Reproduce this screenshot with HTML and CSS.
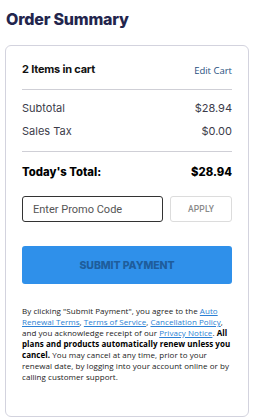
FILE: index.html
```html
<!DOCTYPE html>
<html lang="en">
<head>
    <meta charset="UTF-8">
    <meta name="viewport" content="width=device-width, initial-scale=1.0">
    <title>Order Summary</title>
    <link rel="stylesheet" href="styles.css">
</head>
<body>
    <h1 class="title">Order Summary</h1>

    <div class="card">
        <div class="cart-head">
            <strong>2 Items in cart</strong>
            <a href="#" class="edit-link">Edit Cart</a>
        </div>

        <div class="lines">
            <div class="line">
                <span>Subtotal</span>
                <span>$28.94</span>
            </div>
            <div class="line">
                <span>Sales Tax</span>
                <span>$0.00</span>
            </div>
        </div>

        <div class="total">
            <span>Today's Total:</span>
            <span>$28.94</span>
        </div>

        <div class="promo">
            <input type="text" class="promo-input" placeholder="Enter Promo Code">
            <button class="apply-btn">APPLY</button>
        </div>

        <button class="submit-btn">SUBMIT PAYMENT</button>

        <p class="legal">
            By clicking "Submit Payment", you agree to the <a href="#">Auto Renewal Terms</a>, <a href="#">Terms of Service</a>, <a href="#">Cancellation Policy</a>, and you acknowledge receipt of our <a href="#">Privacy Notice</a>. <strong>All plans and products automatically renew unless you cancel.</strong> You may cancel at any time, prior to your renewal date, by logging into your account online or by calling customer support.
        </p>
    </div>
</body>
</html>
```

FILE: styles.css
```css
body {
    margin: 0;
    padding: 9px 5px 6px;
    font-family: Inter, "Noto Sans", sans-serif;
    background: #fff;
    color: #111;
}
.title {
    margin: 0 0 16px 1px;
    font-size: 16px;
    line-height: 20px;
    font-weight: 800;
    color: #23254d;
    letter-spacing: -0.2px;
}
.card {
    border: 1px solid #d3d3de;
    border-radius: 6px;
    padding: 16px 16px 34px 16px;
}
.cart-head {
    display: flex;
    justify-content: space-between;
    align-items: center;
    height: 14px;
    padding-bottom: 13px;
    border-bottom: 1px solid #cfcfd6;
}
.cart-head strong {
    font-size: 11px;
    font-weight: 700;
    letter-spacing: -0.2px;
}
.edit-link {
    font-family: "Open Sans", sans-serif;
    font-size: 9.5px;
    font-weight: 500;
    color: #1f4f80;
    text-decoration: none;
    padding-top: 3px;
}
.lines {
    padding: 10px 0 12px;
    border-bottom: 1px solid #cfcfd6;
    display: flex;
    flex-direction: column;
    gap: 7px;
}
.line {
    display: flex;
    justify-content: space-between;
    font-size: 11px;
    line-height: 16px;
    color: #3c3c4a;
}
.total {
    display: flex;
    justify-content: space-between;
    margin-top: 12px;
    font-size: 11.3px;
    line-height: 16px;
    font-weight: 800;
    color: #000;
}
.promo {
    display: flex;
    gap: 7px;
    margin-top: 16px;
}
.promo-input {
    width: 141px;
    height: 26px;
    box-sizing: border-box;
    border: 1px solid #333;
    border-radius: 3px;
    padding: 0 10px;
    font-family: Roboto, sans-serif;
    font-size: 11px;
}
.promo-input::placeholder {
    color: #555;
}
.apply-btn {
    flex: 1;
    height: 26px;
    background: #fff;
    border: 1px solid #dcdcdc;
    border-radius: 3px;
    font-family: Roboto, sans-serif;
    font-size: 8.5px;
    font-weight: 500;
    color: #8a8a8a;
    letter-spacing: 0.2px;
}
.submit-btn {
    display: block;
    width: 100%;
    height: 38px;
    margin-top: 24px;
    background: #2f90ea;
    border: none;
    border-radius: 3px;
    font-family: Inter, sans-serif;
    font-size: 10.5px;
    font-weight: 800;
    color: #1e5d9c;
    letter-spacing: -0.1px;
}
.legal {
    margin: 21px 0 0;
    font-family: "Open Sans", sans-serif;
    font-size: 8px;
    line-height: 11px;
    color: #222;
    letter-spacing: 0.05px;
}
.legal a {
    color: #2b7fd4;
}
.legal strong {
    font-weight: 700;
    color: #000;
}
```
